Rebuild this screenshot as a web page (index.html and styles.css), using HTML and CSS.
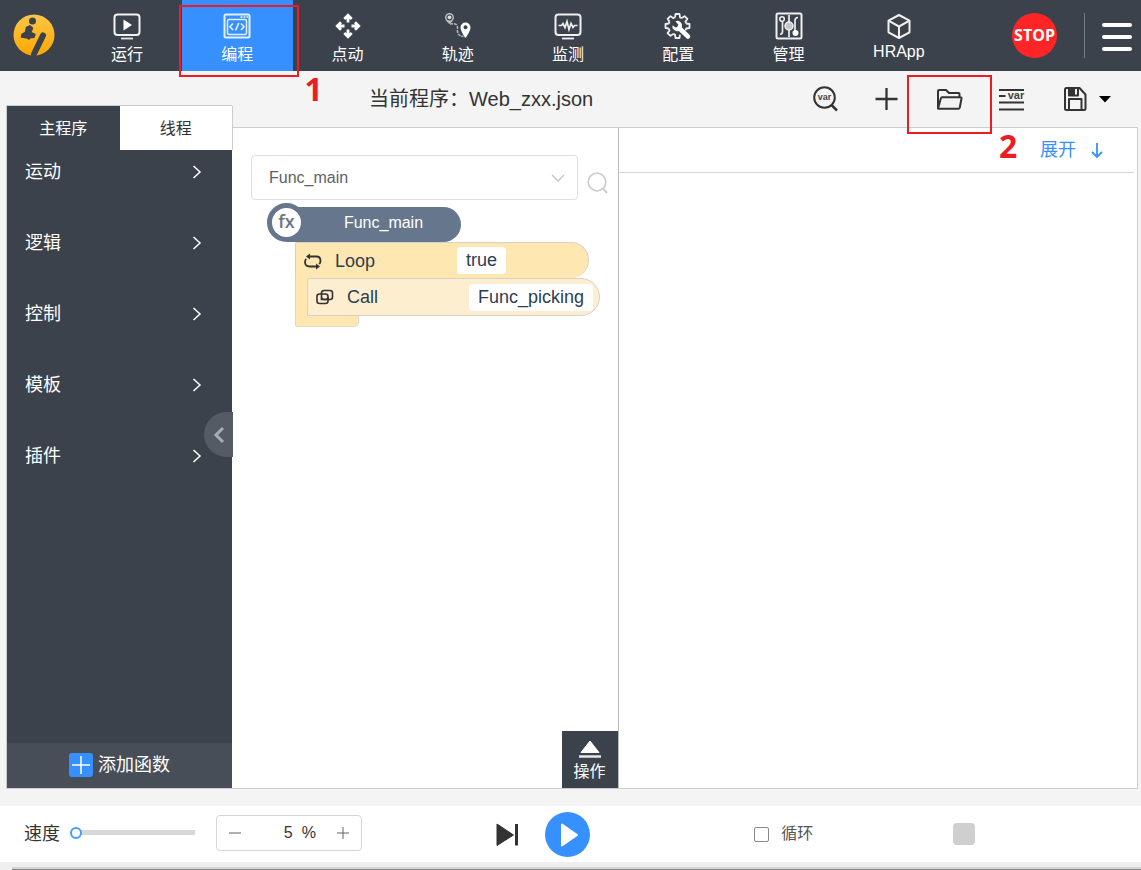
FILE: index.html
```html
<!DOCTYPE html>
<html lang="zh-CN">
<head>
<meta charset="utf-8">
<meta name="viewport" content="width=device-width, initial-scale=1">
<title>Web_zxx.json</title>
<link rel="stylesheet" href="styles.css">
</head>
<body>
<header class="topbar">
  <svg class="logo" viewBox="0 0 42 42" aria-hidden="true">
    <defs><linearGradient id="gold" x1="0" y1="0" x2="0" y2="1"><stop offset="0" stop-color="#fcc64a"/><stop offset="1" stop-color="#fea800"/></linearGradient></defs>
    <circle cx="21" cy="21" r="20.500" fill="url(#gold)"/>
    <g fill="#3c424c" stroke="#3c424c" stroke-linecap="round" stroke-linejoin="round">
      <circle cx="19.500" cy="7" r="3.500" stroke="none"/>
      <path d="M13.500 13.500 16.800 11.800 19.500 14 17.800 18.500 22 20.500 20.800 23.500 17.500 23.200 16 25 13.500 23.700 8.500 23 9 20.500 12.500 18.500z" stroke-width="1.500"/>
      <path stroke-width="6" fill="none" d="M30 21.500 21 40"/>
    </g>
  </svg>
  <nav class="nav">
    <button class="nav-item">
      <svg class="nav-icon" viewBox="0 0 28 28"><rect x="1.500" y="2.500" width="25" height="20.500" rx="3" fill="none" stroke="#f2f2f2" stroke-width="2"/><path d="M10.500 7.500v11l8.500-5.500z" fill="#fff"/><path d="M8 26.500h12" stroke="#e4e4e4" stroke-width="1.800"/></svg>
      <span>运行</span>
    </button>
    <button class="nav-item active">
      <svg class="nav-icon" viewBox="0 0 28 28" fill="none" stroke="#e4efff"><rect x="1.500" y="2.500" width="25" height="23" rx="1.500" stroke-width="2"/><path d="M17.500 5h2m1 0h2m1 0h1.500" stroke-width="1.500"/><rect x="4.500" y="7.500" width="19" height="15" rx="1.500" stroke-width="1.500"/><path d="M10 11.500 7 14.700l3 3.300M18 11.500l3 3.200-3 3.300M15.800 11l-3.300 7.500" stroke-width="1.700"/></svg>
      <span>编程</span>
      <i class="mark mark-nav"></i><b class="mark-number number-nav">1</b>
    </button>
    <button class="nav-item">
      <svg class="nav-icon" viewBox="0 0 28 28" fill="none" stroke="#fff" stroke-width="2.800"><path d="m10.300 7 3.700-3.700L17.700 7M10.300 21l3.700 3.700 3.700-3.700M7 10.300 3.300 14 7 17.700M21 10.300l3.700 3.700-3.700 3.700M14 4v6.500M14 17.500V24M4 14h6.500M17.500 14H24"/></svg>
      <span>点动</span>
    </button>
    <button class="nav-item">
      <svg class="nav-icon" viewBox="0 0 28 28"><path fill="#bdbfc2" fill-rule="evenodd" d="M5.500 1a4.500 4.500 0 0 0-4.500 4.500c0 3 4.500 6.500 4.500 6.500s4.500-3.500 4.500-6.500A4.500 4.500 0 0 0 5.500 1zm0 1.400a3 3 0 1 1 0 6 3 3 0 0 1 0-6z"/><circle cx="5.500" cy="5.300" r="1.900" fill="#ddd"/><path d="M6 12c6-1 8 1 7.500 5s1 7 6 7.500" fill="none" stroke="#b9bcc0" stroke-width="1.500" stroke-dasharray="3 1"/><path fill="#fff" fill-rule="evenodd" d="M21.500 10.500a5 5 0 0 0-5 5c0 4 5 10.500 5 10.500s5-6.500 5-10.500a5 5 0 0 0-5-5zm0 2.800a2 2 0 1 1 0 4 2 2 0 0 1 0-4z"/></svg>
      <span>轨迹</span>
    </button>
    <button class="nav-item">
      <svg class="nav-icon" viewBox="0 0 28 28" fill="none" stroke="#f0f0f0"><rect x="1.500" y="2.500" width="25" height="20.500" rx="3" stroke-width="2"/><path d="M4.500 13.500h3l1.500-2 2 4 2-6 2 8 2-6 2 4 1.500-2h3" stroke-width="1.700"/><path d="M8 26.500h12" stroke-width="1.800"/></svg>
      <span>监测</span>
    </button>
    <button class="nav-item">
      <svg class="nav-icon" viewBox="0 0 28 28" fill="none" stroke="#f0f0f0">
        <defs><path id="tooth" d="M-2.500-8.700-2-12H2l.5 3.300L4.400-7.900"/></defs>
        <g transform="translate(13.500 14)" stroke-width="1.800" stroke-linejoin="round">
          <use href="#tooth"/><use href="#tooth" transform="rotate(45)"/><use href="#tooth" transform="rotate(90)"/><use href="#tooth" transform="rotate(180)"/><use href="#tooth" transform="rotate(225)"/><use href="#tooth" transform="rotate(270)"/><use href="#tooth" transform="rotate(315)"/>
        </g>
        <path d="m15 16 9 8.500" stroke="#fff" stroke-width="4.500" stroke-linecap="round"/>
        <path fill="#fff" stroke="none" d="M11.500 9.200a4.800 4.800 0 0 1 6.500 5.500l-3.500 4.300a4.800 4.800 0 0 1-6-5.800l3 2.300 2.200-.5.500-2.500z"/>
      </svg>
      <span>配置</span>
    </button>
    <button class="nav-item">
      <svg class="nav-icon" viewBox="0 0 28 28" fill="none" stroke="#f0f0f0"><rect x="1.500" y="1.500" width="25" height="25" rx="1.500" stroke-width="2"/><circle cx="7" cy="7" r="2.300" stroke-width="1.500"/><path d="M7.500 9.500v10q0 2.500-2.500 3M14 3v7M14 18v7M23 5.500q-3 0-3 3v11" stroke-width="1.700"/><circle cx="14" cy="14" r="4" fill="#c5c7ca" stroke-width="1.500"/><circle cx="20.500" cy="21" r="3" fill="#fff" stroke="none"/></svg>
      <span>管理</span>
    </button>
    <button class="nav-item latin">
      <svg class="nav-icon" viewBox="0 0 28 28" fill="none" stroke="#f0f0f0" stroke-width="2" stroke-linejoin="round"><path d="m14 3 10.500 5.700v11.600L14 26 3.500 20.300V8.700zM3.500 8.700 14 14.500l10.500-5.800M14 14.500V26"/></svg>
      <span>HRApp</span>
    </button>
  </nav>
  <div class="top-actions">
    <button class="stop">STOP</button>
    <button class="burger" aria-label="菜单"><i></i><i></i><i></i></button>
  </div>
</header>

<main class="workspace">
  <aside class="sidebar">
    <div class="tabs">
      <button class="tab tab-active">主程序</button>
      <button class="tab">线程</button>
    </div>
    <div class="menu">
      <button class="menu-item">运动<svg class="chevron" viewBox="0 0 10 16"><path d="m1.500 2 6.500 6-6.500 6"/></svg></button>
      <button class="menu-item">逻辑<svg class="chevron" viewBox="0 0 10 16"><path d="m1.500 2 6.500 6-6.500 6"/></svg></button>
      <button class="menu-item">控制<svg class="chevron" viewBox="0 0 10 16"><path d="m1.500 2 6.500 6-6.500 6"/></svg></button>
      <button class="menu-item">模板<svg class="chevron" viewBox="0 0 10 16"><path d="m1.500 2 6.500 6-6.500 6"/></svg></button>
      <button class="menu-item">插件<svg class="chevron" viewBox="0 0 10 16"><path d="m1.500 2 6.500 6-6.500 6"/></svg></button>
    </div>
    <button class="add-function">
      <svg class="add-icon" viewBox="0 0 24 24"><rect width="24" height="24" rx="3" fill="#3790ff"/><path d="M12 3v18M3 12h18" stroke="#fff" stroke-width="1.500"/></svg>
      添加函数
    </button>
    <button class="collapse" aria-label="收起"><svg viewBox="0 0 12 18"><path d="m10 2-7 7 7 7" fill="none" stroke="#a9adb2" stroke-width="3"/></svg></button>
  </aside>

  <section class="editor">
    <div class="toolbar">
      <h1 class="title">当前程序：Web_zxx.json</h1>
      <div class="tools">
        <button class="tool" aria-label="查找变量"><svg viewBox="0 0 28 28"><circle cx="13.500" cy="12.500" r="10.300" fill="none" stroke="#333" stroke-width="2"/><path d="m20.500 20 5.500 5.500" stroke="#333" stroke-width="2.500"/><text x="13.500" y="14.500" class="var-small">var</text></svg></button>
        <button class="tool" aria-label="新建"><svg viewBox="0 0 28 28"><path d="M13.500 3v22M2.500 14h22" stroke="#333" stroke-width="2.300"/></svg></button>
        <button class="tool" aria-label="打开"><svg viewBox="0 0 28 28" fill="none" stroke="#333" stroke-width="2" stroke-linejoin="round"><path d="M3 23.500V6q0-1 1-1h7l3 3h9.500q1 0 1 1v3.500M3 23.500 5.800 13.500q.3-1.200 1.500-1.200H25.500q1.200 0 1 1.200L24.800 22.500q-.3 1.200-1.500 1.200H4q-1 0-1-.2"/></svg><i class="mark mark-tool"></i><b class="mark-number number-tool">2</b></button>
        <button class="tool" aria-label="变量列表"><svg viewBox="0 0 28 28"><path d="M2 5h25M2 11h6.500M2 17.500h25M2 24.500h25" stroke="#333" stroke-width="2.200"/><text x="19" y="14" class="var-large">var</text></svg></button>
        <button class="save" aria-label="保存"><svg class="disk" viewBox="0 0 24 26" fill="none" stroke="#333" stroke-width="2" stroke-linejoin="round"><path d="M3.500 2H16.500l6 6.500v14q0 1.500-1.500 1.500H3.500Q2 24 2 22.500v-19Q2 2 3.500 2zM6 24V13h12.500v11"/><path d="M6 2v7.500h9V2"/><path d="M6 2h5v7H6z" fill="#333"/></svg><svg class="caret" viewBox="0 0 12 7"><path d="M0 0h12L6 6.500z" fill="#000"/></svg></button>
      </div>
    </div>
    <div class="panels">
      <div class="program">
        <div class="finder">
          <select class="func-select" aria-label="函数"><option>Func_main</option></select>
          <svg class="select-arrow" viewBox="0 0 14 8"><path d="m1 1 6 6 6-6" fill="none" stroke="#c0c4cc" stroke-width="1.300"/></svg>
          <button class="find" aria-label="搜索"><svg viewBox="0 0 22 24"><circle cx="10" cy="11" r="8.800" fill="none" stroke="#cecece" stroke-width="1.700"/><path d="m16 17.500 4 4.500" stroke="#cecece" stroke-width="2"/></svg></button>
        </div>
        <div class="blocks">
          <div class="func-block"><span class="fx">fx</span><span class="func-name">Func_main</span></div>
          <div class="loop">
            <div class="loop-head">
              <svg class="block-icon" viewBox="0 0 20 18" fill="none" stroke="#333" stroke-width="1.800"><path d="M5 4.500h8.500Q17.500 4.500 17.500 9q0 2-1.300 3.200M14.500 14.500h-8Q2 14.500 2 10q0-2 1.300-3.200"/><path fill="#333" stroke="none" d="M7 1.500v6L3 4.500zM13 11.500v6l4-3z"/></svg>
              <span class="block-name">Loop</span><span class="value">true</span>
            </div>
            <div class="loop-body"><div class="call">
              <svg class="block-icon" viewBox="0 0 20 18" fill="none" stroke="#333" stroke-width="1.600"><rect x="6.500" y="2.500" width="11" height="9" rx="2.500"/><rect x="2" y="6" width="11" height="9.500" rx="2.500"/><path d="M6.500 9.500v2h4q2.500 0 2.500-2.500"/></svg>
              <span class="block-name">Call</span><span class="value">Func_picking</span>
            </div></div>
            <div class="loop-foot"></div>
          </div>
        </div>
        <button class="operate"><svg viewBox="0 0 24 18"><path d="m12 1 9 11.500H3z" fill="#fff" stroke="#fff" stroke-linejoin="round"/><path d="M1 16.500h22" stroke="#e6e7e8" stroke-width="2.500"/></svg>操作</button>
      </div>
      <div class="detail">
        <div class="detail-head"><button class="expand">展开<svg viewBox="0 0 12 18" fill="none" stroke="#3790ff" stroke-width="1.800"><path d="M6 2v14M1 11l5 5 5-5"/></svg></button></div>
      </div>
    </div>
  </section>
</main>

<footer class="player">
  <div class="speed">
    <label for="speed">速度</label>
    <input id="speed" class="slider" type="range" min="0" max="100" value="0">
    <div class="stepper">
      <button aria-label="减少"><svg viewBox="0 0 12 12"><path d="M0 6h12"/></svg></button>
      <input type="text" value="5" aria-label="速度百分比"><span>%</span>
      <button aria-label="增加"><svg viewBox="0 0 12 12"><path d="M0 6h12M6 0v12"/></svg></button>
    </div>
  </div>
  <div class="transport">
    <button class="step" aria-label="单步"><svg viewBox="0 0 24 24"><path d="M1 2v21.500L17.500 13z" fill="#333" stroke="#333" stroke-linejoin="round"/><path d="M20.500 2v21.500" stroke="#333" stroke-width="3"/></svg></button>
    <button class="play" aria-label="运行程序"><svg viewBox="0 0 45 45"><path d="M17 12.500v21l15-10.500z" fill="#fff" stroke="#fff" stroke-width="2" stroke-linejoin="round"/></svg></button>
  </div>
  <label class="cycle"><input type="checkbox">循环</label>
  <div class="status"></div>
</footer>
<div class="bottom-edge"></div>
</body>
</html>
```
FILE: styles.css
```css
* { box-sizing: border-box; }
body {
  margin: 0;
  min-height: 100vh;
  display: flex;
  flex-direction: column;
  background: #f4f4f4;
  color: #333;
  font: 16px/24px "Liberation Sans", "Noto Sans CJK SC", sans-serif;
}
button, input, select { font: inherit; color: inherit; }
button { border: 0; padding: 0; background: none; cursor: pointer; }
svg { display: block; overflow: visible; }

/* top bar */
.topbar { height: 71px; display: flex; align-items: stretch; background: #3c424c; color: #fff; }
.logo { width: 42px; height: 42px; margin: 14px 17px 0 13px; flex: none; }
.nav { flex: 1; display: grid; grid-template-columns: repeat(8, 1fr); }
.nav-item { position: relative; display: flex; flex-direction: column; align-items: center; justify-content: flex-start; gap: 3px; padding-top: 12px; }
.nav-item.active { background: #3790ff; }
.nav-item.latin { gap: 0; }
.nav-icon { width: 28px; height: 28px; }
.top-actions { width: 187px; display: flex; align-items: center; }
.stop { width: 45px; height: 45px; margin-left: 58px; border-radius: 50%; background: #ff2526; color: #fff; font: bold 16px/45px "Liberation Sans Narrow", "Open Sans", sans-serif; }
.burger { display: flex; flex-direction: column; justify-content: center; gap: 8px; height: 45px; margin-left: 27px; padding: 3px 0 0 17px; border-left: 1px solid #75797f; }
.burger i { width: 30px; height: 4px; border-radius: 2px; background: #fff; }

/* numbered highlights */
.mark { position: absolute; border: 2px solid #ed1c24; z-index: 2; pointer-events: none; }
.mark-nav { inset: 5px -6px -6px -3px; }
.mark-tool { inset: 4px -12px -7px -11px; }
.mark-number { position: absolute; z-index: 2; color: #ed1c24; font: bold 32px/32px "Open Sans", sans-serif; }
.number-nav { left: 100%; top: 73px; margin-left: 12px; }
.number-tool { left: 100%; top: 59px; margin-left: 19px; }

/* workspace */
.workspace { flex: 1; display: grid; grid-template-columns: 226px 1fr; padding: 0 3px 0 6px; }
.sidebar { position: relative; display: flex; flex-direction: column; margin-top: 34px; border: solid #ccc; border-width: 1px 0 1px 1px; background: #3c424c; color: #fff; }
.tabs { display: grid; grid-template-columns: 1fr 1fr; height: 44px; flex: none; margin-right: -1px; border-right: 1px solid #ccc; }
.tab { padding-top: 2px; background: #fff; color: #333; }
.tab-active { background: #3c424c; color: #fff; }
.menu { display: grid; gap: 27px; }
.menu-item { height: 44px; display: flex; align-items: center; justify-content: space-between; padding: 0 30px 0 18px; font-size: 18px; }
.chevron { width: 10px; height: 16px; fill: none; stroke: #fff; stroke-width: 1.5px; }
.add-function { height: 45px; margin-top: auto; display: flex; align-items: center; justify-content: center; gap: 5px; padding-bottom: 2px; background: #484e58; font-size: 18px; }
.add-icon { width: 24px; height: 24px; }
.collapse { position: absolute; right: -1px; top: 306px; width: 29px; height: 45px; display: grid; place-items: center; border-radius: 23px 0 0 23px; background: #555b64; }
.collapse svg { width: 12px; height: 18px; }

.editor { min-width: 0; display: flex; flex-direction: column; }
.toolbar { height: 56px; display: flex; align-items: stretch; justify-content: space-between; padding-left: 137px; }
.title { margin: 0; font-size: 20px; font-weight: normal; line-height: 56px; white-space: nowrap; }
.tools { display: flex; }
.tool { position: relative; width: 62px; display: grid; place-items: center; }
.tool svg { width: 28px; height: 28px; }
.var-small, .var-large { font-family: "Liberation Sans", sans-serif; font-weight: bold; text-anchor: middle; fill: #444; }
.var-small { font-size: 9px; }
.var-large { font-size: 11px; }
.save { width: 96px; display: flex; align-items: center; gap: 12px; padding-left: 21px; }
.disk { width: 24px; height: 26px; }
.caret { width: 12px; height: 7px; }

.panels { flex: 1; display: grid; grid-template-columns: 387fr 519fr; border: solid #ccc; border-width: 1px 1px 1px 0; background: #fff; }
.program { display: flex; flex-direction: column; border-right: 1px solid #bbb; padding-left: 19px; }
.finder { position: relative; display: flex; align-items: center; margin: 27px 9px 0 0; }
.func-select { flex: 1; min-width: 0; height: 45px; padding: 0 17px; border: 1px solid #dcdfe6; border-radius: 4px; appearance: none; background: #fff; color: #606266; }
.select-arrow { position: absolute; right: 44px; top: 19px; width: 14px; height: 8px; pointer-events: none; }
.find { margin: 10px 0 0 9px; }
.find svg { width: 22px; height: 24px; }
.blocks { padding: 3px 0 0 16px; }
.func-block { width: 194px; height: 39px; display: flex; align-items: flex-end; }
.fx { position: relative; flex: none; width: 39px; height: 39px; border: 5px solid #66768c; border-radius: 50%; background: #fff; color: #6b7480; font: 600 18px/27px "Open Sans", sans-serif; text-align: center; }
.func-name { flex: 1; height: 35px; margin-left: -20px; padding: 0 0 4px 20px; border-radius: 0 18px 18px 0; background: #66768c; color: #fff; line-height: 31px; text-align: center; }
.fx { z-index: 1; }
.loop { margin-left: 28px; width: 305px; color: #2c3e50; font-size: 18px; }
.loop-head, .call { display: flex; align-items: center; padding-left: 7px; border: 1px solid #d5d2c9; border-radius: 2px 19px 19px 0; }
.loop-head { width: 294px; height: 36px; background: #ffe7b2; border-bottom: 0; }
.loop-body { padding-left: 11px; background: linear-gradient(#ffe7b2, #ffe7b2) left / 13px 100% no-repeat; border-left: 1px solid #ddd6c5; }
.call { height: 38px; background: #fdeed0; }
.loop-foot { width: 64px; height: 11px; border: 1px solid #e0d9c8; border-top: 0; border-radius: 0 0 5px 2px; background: #ffe7b2; }
.block-icon { width: 20px; height: 18px; margin-right: 12px; flex: none; }
.block-name { width: 122px; }
.value { height: 27px; padding: 0 9px; border-radius: 4px; background: #fff; line-height: 27px; }
.operate { align-self: flex-end; width: 56px; height: 57px; margin-top: auto; padding-top: 4px; display: flex; flex-direction: column; align-items: center; justify-content: center; gap: 2px; background: #3c424c; color: #fff; }
.operate svg { width: 24px; height: 18px; }
.detail-head { height: 45px; margin-right: 3px; display: flex; justify-content: flex-end; padding-right: 31px; border-bottom: 1px solid #d4d4d4; }
.expand { display: flex; align-items: center; gap: 15px; color: #3790ff; font-size: 18px; }
.expand svg { width: 12px; height: 18px; }

/* playback bar */
.player { min-height: 56px; margin-top: 17px; display: grid; grid-template-columns: 43.5% 22.6% 17.4% 1fr; align-items: center; background: #fff; }
.speed { display: flex; align-items: center; padding-left: 24px; font-size: 18px; }
.slider { appearance: none; width: 125px; height: 12px; margin: 0 21px 3px 10px; background: linear-gradient(#d8d8d8, #d8d8d8) right / 121px 5px no-repeat; }
.slider::-webkit-slider-thumb { appearance: none; width: 12px; height: 12px; border: 2px solid #409eff; border-radius: 50%; background: #fff; }
.stepper { width: 146px; height: 36px; display: flex; align-items: center; margin-bottom: 2px; border: 1px solid #d5d5d5; border-radius: 4px; font-size: 16px; }
.stepper button { width: 36px; flex: none; display: grid; place-items: center; }
.stepper button svg { width: 12px; height: 12px; stroke: #606266; stroke-width: 1px; }
.stepper input { flex: 1; min-width: 0; border: 0; padding: 0; outline: 0; background: none; text-align: right; }
.stepper span { margin: 0 9px; }
.transport { display: flex; align-items: center; gap: 25px; }
.step svg { width: 24px; height: 24px; }
.play { width: 45px; height: 45px; border-radius: 50%; background: #3790ff; }
.cycle { display: flex; align-items: center; gap: 12px; color: #555; }
.cycle input { appearance: none; width: 15px; height: 15px; margin: 0; border: 1px solid #8a8a8a; border-radius: 2px; background: #fff; }
.status { width: 22px; height: 22px; border-radius: 4px; background: #cfcfcf; }
.bottom-edge { height: 8px; padding-left: 12px; background: linear-gradient(#888, #888) 12px 100% / 100% 1px no-repeat, linear-gradient(#d4d4d4, #d4d4d4) 12px 5px / 100% 2px no-repeat, #efefef; }
```
